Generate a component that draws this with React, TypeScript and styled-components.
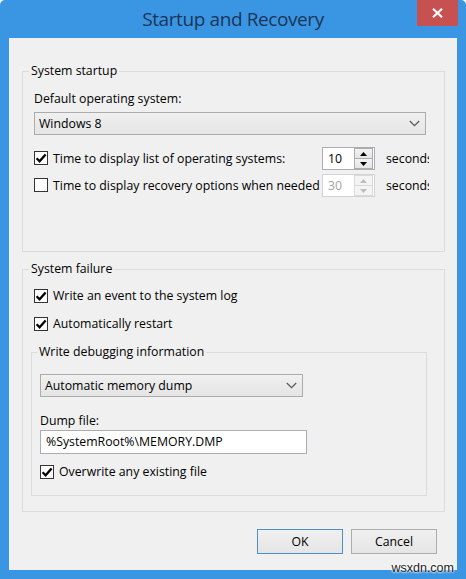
import React from "react";
import styled, { createGlobalStyle } from "styled-components";

const FS = "12.3px";

const GlobalStyle = createGlobalStyle`
  html, body { margin: 0; padding: 0; background: #ffffff; }
  body { font-family: "Open Sans", "Noto Sans", sans-serif; font-size: ${FS}; color: #000; }
  * { box-sizing: border-box; }
`;

const Window = styled.div`
  position: relative;
  width: 466px;
  height: 579px;
  background: #3a95e3;
  border-radius: 5px 5px 0 0;
  display: flex;
  flex-direction: column;
  overflow: hidden;
`;

const TitleBar = styled.div`
  flex: none;
  height: 38px;
  display: grid;
  grid-template-columns: 1fr auto 1fr;
  align-items: center;
`;

const Title = styled.h1`
  grid-column: 2;
  margin: 0;
  font-family: "Open Sans", "Noto Sans", sans-serif;
  font-weight: 400;
  font-size: 19px;
  letter-spacing: -0.4px;
  line-height: 38px;
  color: #1b3658;
  white-space: nowrap;
`;

const CloseButton = styled.button`
  grid-column: 3;
  justify-self: end;
  align-self: start;
  width: 41px;
  height: 26px;
  margin-right: 8px;
  padding: 0;
  border: none;
  background: #c75050;
  display: flex;
  align-items: center;
  justify-content: center;
`;

const Client = styled.div`
  flex: 1;
  margin: 0 9px 9px 9px;
  background: #f0f0f0;
  padding: 25px 12px 15px 13px;
  display: flex;
  flex-direction: column;
`;

const Group = styled.fieldset<{ $padding: string; $mt?: number }>`
  margin: ${(p) => p.$mt ?? 0}px 0 0 0;
  min-width: 0;
  border: 1px solid #dcdcdc;
  padding: ${(p) => p.$padding};
  display: flex;
  flex-direction: column;
  align-items: flex-start;
`;

const Legend = styled.legend<{ $ml: number }>`
  margin-left: ${(p) => p.$ml}px;
  padding: 0 2px;
  font-size: ${FS};
  line-height: 16px;
  color: #000;
`;

const FieldLabel = styled.div<{ $mt?: number }>`
  margin-top: ${(p) => p.$mt ?? 0}px;
  font-size: ${FS};
  line-height: 16px;
  white-space: nowrap;
`;

const Combo = styled.div<{ $width: string; $mt?: number }>`
  margin-top: ${(p) => p.$mt ?? 0}px;
  width: ${(p) => p.$width};
  height: 23px;
  border: 1px solid #acacac;
  background: linear-gradient(#f0f0f0, #e5e5e5);
  display: flex;
  align-items: center;
  justify-content: space-between;
  padding: 0 5px 0 4px;
  font-size: ${FS};
  line-height: 16px;
`;

const TimeRow = styled.div<{ $mt?: number }>`
  margin-top: ${(p) => p.$mt ?? 0}px;
  display: grid;
  grid-template-columns: 288px 53px 54px;
  height: 23px;
  align-items: center;
`;

const CheckRow = styled.label<{ $mt?: number; $ml?: number }>`
  margin-top: ${(p) => p.$mt ?? 0}px;
  margin-left: ${(p) => p.$ml ?? 0}px;
  display: flex;
  align-items: center;
  gap: 5px;
  height: 16px;
  font-size: ${FS};
  line-height: 16px;
  white-space: nowrap;
`;

const Box = styled.span`
  flex: none;
  width: 14px;
  height: 14px;
  margin-top: -1px;
  border: 1px solid #333333;
  background: #ffffff;
  display: flex;
  align-items: center;
  justify-content: center;
`;

const Spinner = styled.div<{ $disabled?: boolean }>`
  width: 53px;
  height: 23px;
  border: 1px solid ${(p) => (p.$disabled ? "#d3d3d3" : "#abadb3")};
  background: #ffffff;
  display: flex;
  align-items: stretch;
`;

const SpinValue = styled.span<{ $disabled?: boolean }>`
  flex: 1;
  padding-left: 5px;
  font-size: ${FS};
  line-height: 21px;
  color: ${(p) => (p.$disabled ? "#a3a3a3" : "#000")};
`;

const SpinButtons = styled.div`
  width: 19px;
  margin-right: 1px;
  display: flex;
  flex-direction: column;
`;

const SpinButton = styled.span<{ $disabled?: boolean }>`
  flex: 1;
  border: 1px solid ${(p) => (p.$disabled ? "#dadada" : "#acacac")};
  background: ${(p) =>
    p.$disabled ? "#f4f4f4" : "linear-gradient(#f3f3f3, #e5e5e5)"};
  display: flex;
  align-items: center;
  justify-content: center;
  & + & {
    border-top: none;
  }
`;

const Seconds = styled.span`
  padding-left: 11px;
  overflow: hidden;
  font-size: ${FS};
  line-height: 16px;
  white-space: nowrap;
`;

const TextBox = styled.div<{ $mt?: number }>`
  margin-top: ${(p) => p.$mt ?? 0}px;
  width: 267px;
  height: 24px;
  border: 1px solid #abadb3;
  background: #ffffff;
  padding-left: 5px;
  font-size: ${FS};
  line-height: 22px;
  white-space: nowrap;
`;

const ButtonRow = styled.div`
  margin-top: 17px;
  padding-right: 8px;
  display: flex;
  justify-content: flex-end;
  gap: 8px;
`;

const DialogButton = styled.button<{ $default?: boolean }>`
  width: 86px;
  height: 25px;
  padding: 0;
  border: 1px solid ${(p) => (p.$default ? "#4d8fcf" : "#adadad")};
  background: linear-gradient(#f0f0f0, #e5e5e5);
  font-family: "Open Sans", "Noto Sans", sans-serif;
  font-size: ${FS};
  color: #000;
`;

const Watermark = styled.span`
  position: absolute;
  right: 12px;
  bottom: 4px;
  font-family: "Liberation Sans", Arial, sans-serif;
  font-size: 12.5px;
  line-height: 14px;
  color: #1a1a1a;
  text-shadow: 0 0 2px #ffffff, 0 0 2px #ffffff, 0 0 3px #ffffff;
`;

const Chevron = () => (
  <svg width="11" height="7" viewBox="0 0 11 7">
    <polyline points="0.8,1 5.5,5.7 10.2,1" fill="none" stroke="#5a5a5a" strokeWidth="1.3" />
  </svg>
);

const Check = () => (
  <svg width="12" height="12" viewBox="0 0 12 12">
    <polyline points="1.6,6.2 4.6,9.2 10.6,2.4" fill="none" stroke="#000" strokeWidth="2.3" strokeLinejoin="miter" />
  </svg>
);

const Arrow = ({ up, color }: { up: boolean; color: string }) => (
  <svg width="7" height="4" viewBox="0 0 7 4">
    <polygon points={up ? "3.5,0 7,4 0,4" : "0,0 7,0 3.5,4"} fill={color} />
  </svg>
);

const CheckBox = ({ checked }: { checked: boolean }) => (
  <Box>{checked ? <Check /> : null}</Box>
);

const Spin = ({ value, disabled }: { value: string; disabled?: boolean }) => {
  const c = disabled ? "#bdbdbd" : "#000";
  return (
    <Spinner $disabled={disabled}>
      <SpinValue $disabled={disabled}>{value}</SpinValue>
      <SpinButtons>
        <SpinButton $disabled={disabled}>
          <Arrow up color={c} />
        </SpinButton>
        <SpinButton $disabled={disabled}>
          <Arrow up={false} color={c} />
        </SpinButton>
      </SpinButtons>
    </Spinner>
  );
};

export default function App() {
  return (
    <>
      <GlobalStyle />
      <Window>
        <TitleBar>
          <Title>Startup and Recovery</Title>
          <CloseButton aria-label="Close">
            <svg width="11" height="10" viewBox="0 0 11 10">
              <path d="M1 0.8 L10 9.2 M10 0.8 L1 9.2" stroke="#ffffff" strokeWidth="2.2" />
            </svg>
          </CloseButton>
        </TitleBar>
        <Client>
          <Group $padding="12px 18px 54px 11px">
            <Legend $ml={-5}>System startup</Legend>
            <FieldLabel>Default operating system:</FieldLabel>
            <Combo $width="100%" $mt={5}>
              <span>Windows 8</span>
              <Chevron />
            </Combo>
            <TimeRow $mt={12}>
              <CheckRow>
                <CheckBox checked />
                Time to display list of operating systems:
              </CheckRow>
              <Spin value="10" />
              <Seconds>seconds</Seconds>
            </TimeRow>
            <TimeRow $mt={4}>
              <CheckRow>
                <CheckBox checked={false} />
                Time to display recovery options when needed
              </CheckRow>
              <Spin value="30" disabled />
              <Seconds>seconds</Seconds>
            </TimeRow>
          </Group>
          <Group $padding="11px 17px 15px 8px" $mt={9}>
            <Legend $ml={-2}>System failure</Legend>
            <CheckRow $ml={3}>
              <CheckBox checked />
              Write an event to the system log
            </CheckRow>
            <CheckRow $mt={12} $ml={3}>
              <CheckBox checked />
              Automatically restart
            </CheckRow>
            <Group $padding="14px 8px 15px 8px" $mt={12} style={{ alignSelf: "stretch" }}>
              <Legend $ml={-3}>Write debugging information</Legend>
              <Combo $width="263px">
                <span>Automatic memory dump</span>
                <Chevron />
              </Combo>
              <FieldLabel $mt={16}>Dump file:</FieldLabel>
              <TextBox $mt={1}>%SystemRoot%\MEMORY.DMP</TextBox>
              <CheckRow $mt={10}>
                <CheckBox checked />
                Overwrite any existing file
              </CheckRow>
            </Group>
          </Group>
          <ButtonRow>
            <DialogButton $default>OK</DialogButton>
            <DialogButton>Cancel</DialogButton>
          </ButtonRow>
        </Client>
        <Watermark>wsxdn.com</Watermark>
      </Window>
    </>
  );
}
